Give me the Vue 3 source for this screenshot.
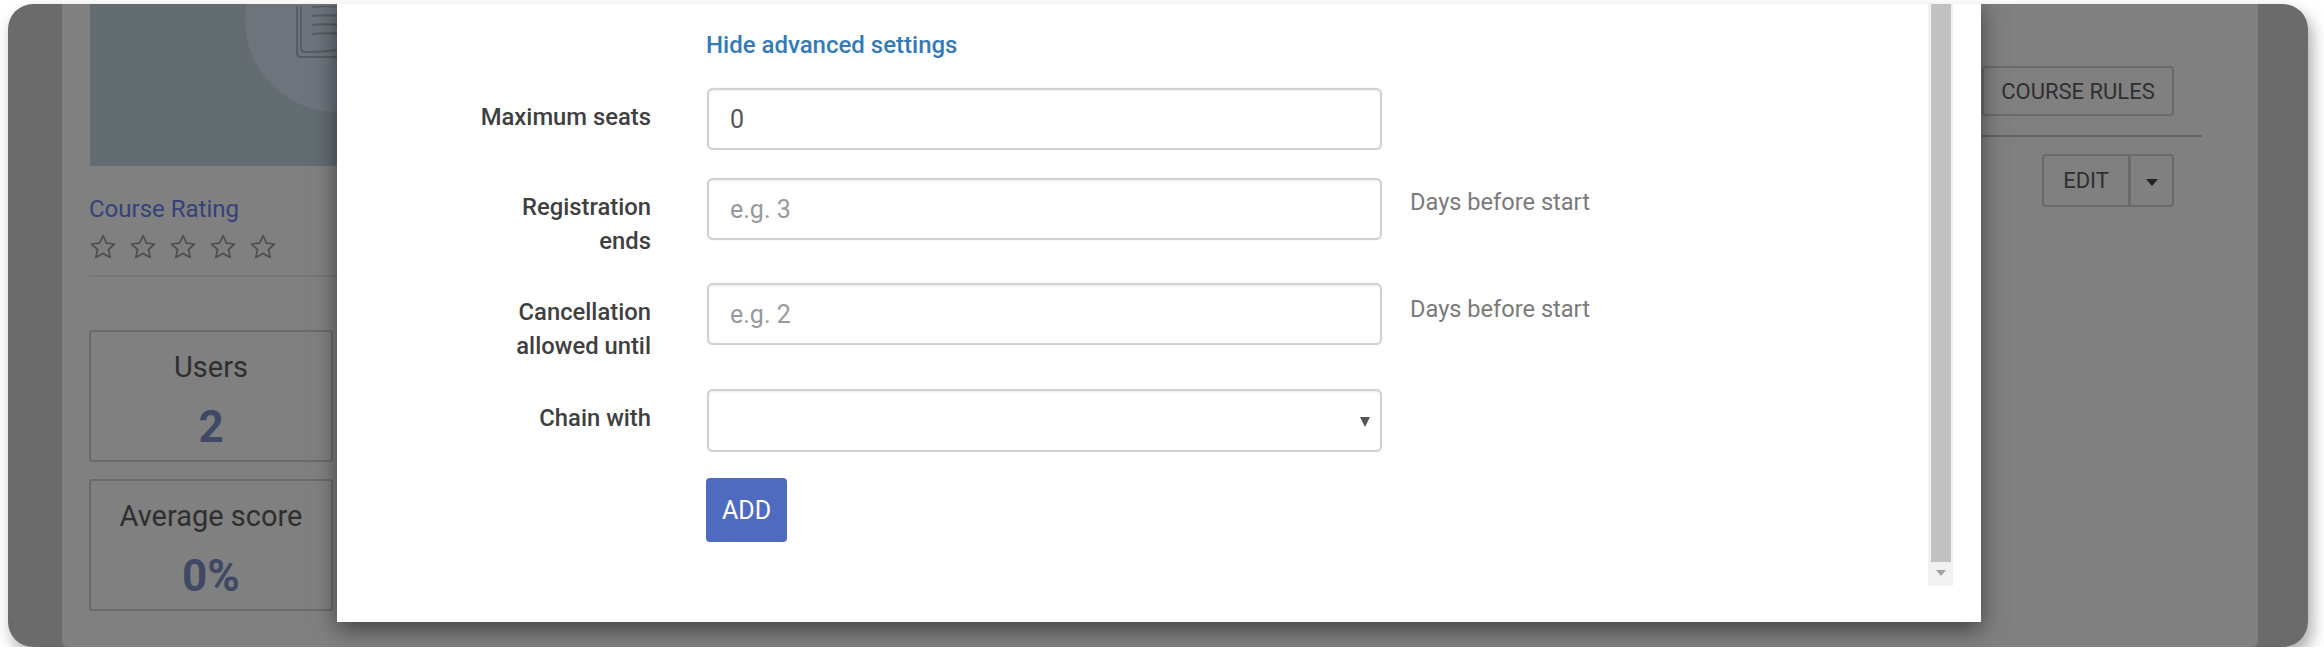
<script setup>
const stars = [1, 2, 3, 4, 5]
const stats = [
  { label: 'Users', value: '2' },
  { label: 'Average score', value: '0%' },
]
</script>

<template>
  <div class="frame">
    <div class="clip">
      <div class="page">
        <aside class="side">
          <div class="cover">
            <div class="disc"></div>
            <svg class="book" viewBox="0 0 60 60" width="60" height="60" fill="none" stroke="#565c64" stroke-width="2">
              <path d="M2 -10V47q0 4 4 4H60" />
              <path d="M6 -10V42q0 4 4 4h6c10 0 22 -2 34 -2" />
              <path d="M17 1q14 -1.5 30 0M17 10q14 -1.5 30 0M17 19q14 -1.5 30 0M17 28q14 -1.5 30 0" />
            </svg>
          </div>
          <div class="rating-title">Course Rating</div>
          <div class="stars">
            <svg v-for="s in stars" :key="s" class="star" viewBox="0 0 26 24" width="26" height="24">
              <path d="M13 1.6l3.4 7.5 8.1.9-6 5.5 1.7 8-7.2-4.1-7.2 4.1 1.7-8-6-5.5 8.1-.9z" fill="none" stroke="#4f4f4f" stroke-width="1.7" stroke-linejoin="round" />
            </svg>
          </div>
          <div class="side-rule"></div>
          <div class="stat" v-for="st in stats" :key="st.label">
            <div class="stat-label">{{ st.label }}</div>
            <div class="stat-value">{{ st.value }}</div>
          </div>
        </aside>
        <main class="main">
          <div class="tabs">
            <button class="btn">COURSE RULES</button>
          </div>
          <div class="main-rule"></div>
          <div class="tools">
            <div class="split">
              <button class="split-main">EDIT</button>
              <button class="split-caret"><span class="caret"></span></button>
            </div>
          </div>
        </main>
      </div>

      <div class="modal">
        <form class="form">
          <a class="toggle">Hide advanced settings</a>
          <div class="row r1">
            <label class="label">Maximum seats</label>
            <input class="field" value="0" />
          </div>
          <div class="row r2">
            <label class="label">Registration ends</label>
            <input class="field" placeholder="e.g. 3" />
            <span class="hint">Days before start</span>
          </div>
          <div class="row r3">
            <label class="label">Cancellation allowed until</label>
            <input class="field" placeholder="e.g. 2" />
            <span class="hint h3">Days before start</span>
          </div>
          <div class="row r4">
            <label class="label">Chain with</label>
            <div class="field select"><span class="select-arrow"></span></div>
          </div>
          <button type="button" class="add">ADD</button>
        </form>
        <div class="scrollbar">
          <div class="thumb"></div>
          <div class="scroll-arrow"></div>
        </div>
      </div>
    </div>
  </div>
</template>

<style>
html, body { margin: 0; background: #fff; }
</style>

<style scoped>
* { box-sizing: border-box; }
.frame {
  width: 2300px;
  height: 643px;
  margin: 4px 0 0 8px;
  border-radius: 25px;
  box-shadow: 4px 8px 16px rgba(0, 0, 0, 0.34);
  font-family: Roboto, "Liberation Sans", sans-serif;
}
.clip {
  position: relative;
  height: 100%;
  border-radius: 25px;
  background: #6b6b6b;
  overflow: hidden;
}
.page {
  display: flex;
  justify-content: space-between;
  width: 2196px;
  height: 643px;
  margin-left: 54px;
  padding-left: 27px;
  background: #808080;
  border-radius: 0 0 6px 6px;
}
.side { width: 248px; }
.cover {
  position: relative;
  width: 330px;
  height: 162px;
  margin-left: 1px;
  background: #636c71;
  overflow: hidden;
}
.disc {
  position: absolute;
  left: 155px;
  top: -76px;
  width: 184px;
  height: 184px;
  border-radius: 50%;
  background: #6e737c;
}
.book { position: absolute; left: 205px; top: 2px; }
.rating-title {
  margin-top: 28px;
  font-size: 24px;
  line-height: 30px;
  color: #344278;
}
.stars { display: flex; gap: 14px; margin-top: 10px; margin-left: 1px; height: 26px; }
.side-rule { height: 2px; width: 250px; margin-top: 15px; background: #757575; }
.stat {
  width: 244px;
  height: 132px;
  margin-top: 17px;
  border: 2px solid #6a6a6a;
  border-radius: 3px;
  text-align: center;
}
.side-rule + .stat { margin-top: 53px; }
.stat-label { margin-top: 17px; font-size: 29px; line-height: 36px; color: #2f2f2f; }
.stat-value { margin-top: 19px; font-size: 44px; line-height: 46px; font-weight: 700; color: #3f4965; }
.main { width: 300px; padding-right: 56px; display: flex; flex-direction: column; align-items: flex-end; }
.tabs { margin-top: 62px; padding-right: 28px; }
.btn, .split-main, .split-caret {
  font-family: inherit;
  font-size: 22px;
  color: #2f2f2f;
  background: transparent;
  border: 2px solid #6a6a6a;
}
.btn { width: 192px; height: 50px; border-radius: 4px; padding: 0; }
.main-rule { width: 220px; height: 2px; margin-top: 19px; background: #636363; }
.tools { margin-top: 17px; padding-right: 28px; }
.split { display: flex; height: 53px; }
.split-main { width: 86px; padding: 0; border-radius: 4px 0 0 4px; border-right: 0; }
.split-caret { width: 46px; padding: 0; border-radius: 0 4px 4px 0; border-left: 3px solid #6a6a6a; }
.caret {
  display: inline-block;
  vertical-align: middle;
  border-top: 7px solid #222;
  border-left: 6.5px solid transparent;
  border-right: 6.5px solid transparent;
}
.modal {
  position: absolute;
  left: 329px;
  top: -4px;
  width: 1644px;
  height: 622px;
  background: #fff;
  box-shadow: 0 7px 22px rgba(0, 0, 0, 0.5);
  display: flex;
  justify-content: space-between;
}
.form { width: 1500px; padding-top: 32px; }
.toggle {
  display: block;
  margin-left: 369px;
  height: 56px;
  font-size: 24px;
  line-height: 26px;
  font-weight: 500;
  color: #337ab7;
}
.row { display: flex; align-items: flex-start; }
.r1 { margin-bottom: 28px; }
.r2 { margin-bottom: 25px; }
.r3 { margin-bottom: 26px; }
.r4 { margin-bottom: 26px; }
.label {
  width: 314px;
  margin-right: 56px;
  padding: 12px 0 0 134px;
  font-size: 23.8px;
  line-height: 34px;
  font-weight: 500;
  text-align: right;
  color: #3f3f3f;
}
.field {
  width: 675px;
  height: 62px;
  padding: 0 21px;
  border: 2px solid #d2d2d2;
  border-radius: 6px;
  box-shadow: inset 0 1px 2px rgba(0, 0, 0, 0.08), 0 0 1px #ccc;
  font-family: inherit;
  font-size: 25px;
  color: #555;
  background: #fff;
  outline: none;
}
.field::placeholder { color: #999; }
.hint { margin-left: 28px; margin-top: 9px; font-size: 23.6px; line-height: 30px; color: #7a7a7a; }
.h3 { margin-top: 11px; }
.select { position: relative; height: 63px; }
.select-arrow {
  position: absolute;
  right: 10px;
  top: 26px;
  border-top: 10px solid #555;
  border-left: 5px solid transparent;
  border-right: 5px solid transparent;
}
.add {
  display: block;
  margin-left: 369px;
  width: 81px;
  height: 64px;
  padding: 0;
  border: 0;
  border-radius: 4px;
  background: #4f6bbf;
  color: #fff;
  font-family: inherit;
  font-size: 25px;
}
.scrollbar {
  width: 25px;
  height: 586px;
  margin-right: 28px;
  background: #f1f1f1;
  display: flex;
  flex-direction: column;
  align-items: center;
}
.thumb { width: 20px; height: 562px; background: #c1c1c1; flex: none; }
.scroll-arrow {
  margin-top: 8px;
  border-top: 6px solid #a3a3a3;
  border-left: 5px solid transparent;
  border-right: 5px solid transparent;
}
</style>
